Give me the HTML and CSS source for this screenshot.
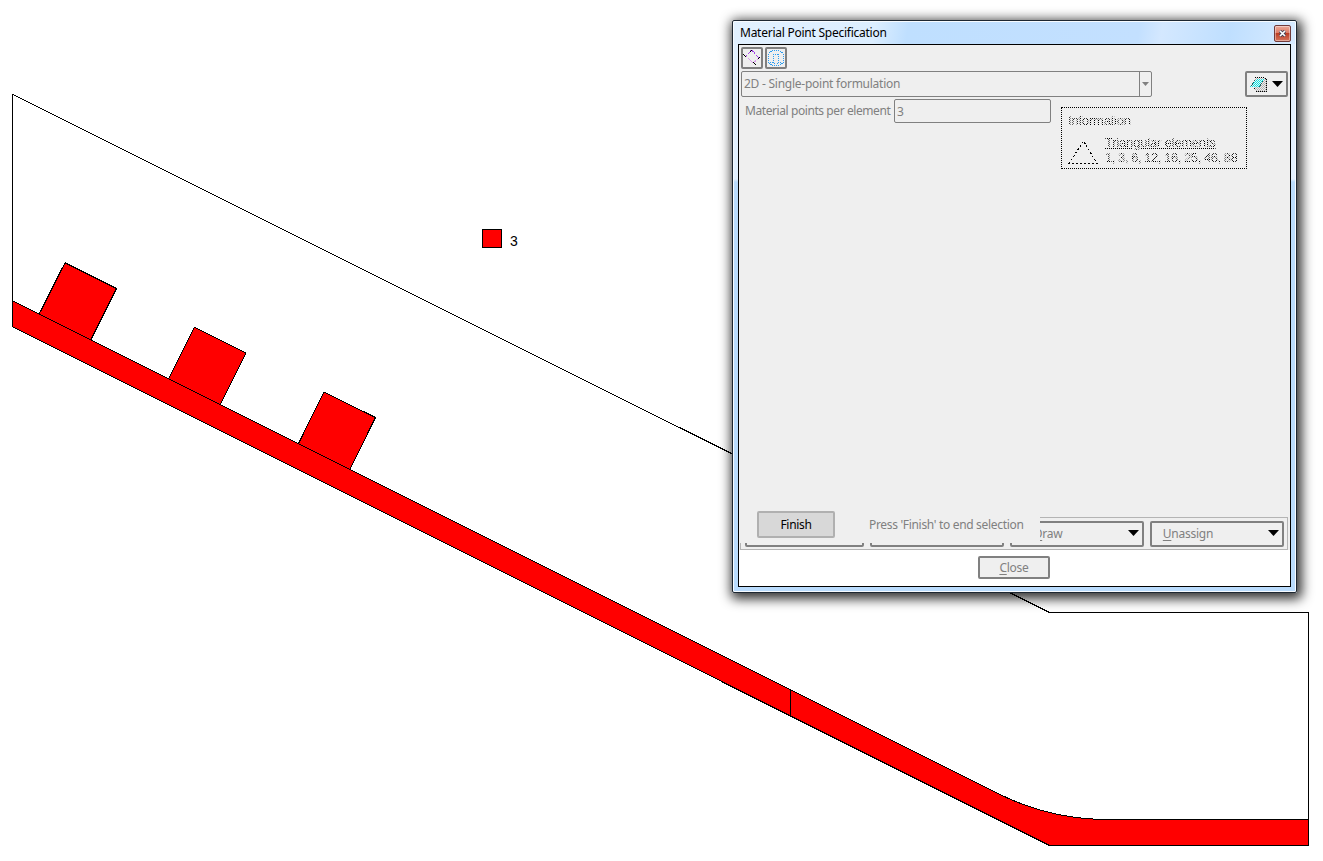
FILE: index.html
```html
<!DOCTYPE html>
<html lang="en">
<head>
<meta charset="utf-8">
<title>Material Point Specification</title>
<link rel="stylesheet" href="styles.css">
</head>
<body>
<main class="desktop">
  <svg class="model" width="1323" height="861" viewBox="0 0 1323 861" shape-rendering="crispEdges">
    <g fill="#f00" stroke="#000">
      <path d="M39.200 314L65 262.700L116.500 288.500L91 339.500"/>
      <path d="M168.800 378.500L194.500 327.200L246 353L220.500 404"/>
      <path d="M298.500 443.500L324 392L375.500 417.500L350 469"/>
      <path d="M12.500 300.800L998 793.500A246 246 0 0 0 1108 819.500H1308.500V845.500H1049.500L12.500 326.800Z"/>
      <path d="M482.500 229.500H501.500V247.500H482.500Z"/>
    </g>
    <path d="M12.500 326.500V94.200L1049.500 612.500H1308.500V845.500M790.500 689.500V715.500" fill="none" stroke="#000"/>
    <text class="model-label" x="510" y="246">3</text>
  </svg>

  <section class="window">
    <header class="titlebar">
      <span class="title">Material Point Specification</span>
      <button class="window-close" aria-label="Close window">
        <svg width="7" height="7" viewBox="0 0 7 7"><path d="M1 1L6 6M6 1L1 6" stroke="#3d4254" stroke-width="3.200"/><path d="M1 1L6 6M6 1L1 6" stroke="#fff" stroke-width="1.700"/></svg>
      </button>
    </header>
    <div class="client">
      <div class="toolbar">
        <button class="tool"><svg width="18" height="18" viewBox="0 0 18 18" shape-rendering="crispEdges" fill="none"><path d="M3 7L8.500 1L16 9" stroke="#a445e8" stroke-dasharray="2 1"/><path d="M3 7L10 14L16 9" stroke="#dc9cf0" stroke-dasharray="2 1"/><path d="M0 5L3 8M7 3L9 1M15 10L17 8M10 13L13 16" stroke="#000"/></svg></button>
        <button class="tool"><svg width="18" height="18" viewBox="0 0 18 18" shape-rendering="crispEdges" fill="none" stroke="#2b9cf0" stroke-dasharray="1 1"><path d="M5 1.500H13M5 16.500H13M1.500 5V14M16.500 5V14M2 4L5 2M13 2L16 4M2 14L5 16M13 16L16 14M6 5.500H12M6.500 5V14M11.500 5V14M3 13.500H7M11 13.500H15M7.500 14V16M10.500 14V16"/></svg></button>
      </div>
      <div class="formulation">
        <div class="combo"><span>2D - Single-point formulation</span><i class="combo-arrow"><svg width="7" height="4"><path d="M0 0H7L3.500 4Z" fill="#808080"/></svg></i></div>
        <button class="shade"><svg width="17" height="17" viewBox="0 0 17 17" shape-rendering="crispEdges">
          <defs>
            <pattern id="cyan" width="2" height="2" patternUnits="userSpaceOnUse"><path d="M0 0H1V1H0ZM1 1H2V2H1Z" fill="#00e5e5"/></pattern>
            <pattern id="grey" width="2" height="2" patternUnits="userSpaceOnUse"><path d="M0 0H1V1H0ZM1 1H2V2H1Z" fill="#b4b4b4"/></pattern>
          </defs>
          <path d="M5 1.500H14.500L16.500 3.500V15.500H6.500L4.500 13.500V10" fill="url(#grey)"/><path d="M5 1.500H14.500L16.500 3.500V15.500H6.500L4.500 13.500V10" fill="none" stroke="#000" stroke-dasharray="1 1"/><path d="M0 11L6 3H14L9 11Z" fill="#efefef"/><path d="M0 11L6 3H14L9 11Z" fill="url(#cyan)"/><path d="M1 10L6 3M9 11L14 4" stroke="#1a6060" stroke-dasharray="1 1"/></svg><svg width="11" height="6"><path d="M0 0H11L5.500 6Z"/></svg></button>
      </div>
      <div class="settings">
        <label class="field"><span>Material points per element</span><input value="3" disabled></label>
        <div class="info">
          <div class="info-heading dithered">Information</div>
          <div class="info-row">
            <svg width="30" height="24" viewBox="0 0 30 24" shape-rendering="crispEdges"><path d="M1 23.500L15.500 1L29 23.500Z" fill="none" stroke="#000" stroke-dasharray="2 2"/></svg>
            <div class="info-text"><div class="dithered underlined">Triangular elements</div><div class="dithered numbers">1, 3, 6, 12, 16, 25, 46, 88</div></div>
          </div>
        </div>
      </div>
      <div class="actions">
        <button class="action"></button>
        <button class="action wide"></button>
        <button class="action wide"><span><u>D</u>raw</span><svg width="11" height="6"><path d="M0 0H11L5.500 6Z"/></svg></button>
        <button class="action wide"><span><u>U</u>nassign</span><svg width="11" height="6"><path d="M0 0H11L5.500 6Z"/></svg></button>
        <div class="selection-prompt"><button class="finish">Finish</button><span>Press 'Finish' to end selection</span></div>
      </div>
      <footer class="footer"><button class="close"><span><u>C</u>lose</span></button></footer>
    </div>
  </section>
</main>
</body>
</html>
```
FILE: styles.css
```css
* { box-sizing: border-box; }
body { margin: 0; background: #fff; overflow: hidden; font: 12px/16px "Noto Sans", "Open Sans", sans-serif; letter-spacing: -0.25px; color: #808080; }
button { font: inherit; letter-spacing: inherit; color: inherit; padding: 0; margin: 0; background: #efefef; border: 2px solid #808080; border-radius: 2px; }
svg { display: block; flex: none; }
u { text-decoration: underline; text-underline-offset: 2px; }
.desktop { position: relative; width: 1323px; height: 861px; }
.model-label { font: 14px "Liberation Sans", Arial, sans-serif; letter-spacing: 0; fill: #000; }

.window {
  position: absolute; left: 732px; top: 20px; width: 565px; height: 573px;
  display: flex; flex-direction: column; padding: 0 5px 5px;
  border: 1px solid #1d2732; border-radius: 2px;
  background: linear-gradient(#e3f1ff 0, #e3f1ff 158px, #badcfd 161px);
  box-shadow: inset 0 0 0 1px #f7fbff, 2px 3px 12px 3px rgba(0, 0, 0, .8);
}
.titlebar {
  flex: none; height: 23px; margin: 0 -4px; padding: 0 4px 0 6px;
  display: flex; align-items: center; justify-content: space-between;
  border-top: 1px solid #f7fbff;
  background: linear-gradient(100deg, #e2f1ff 0, #dceeff 25%, #bfdfff 31%, #c3e0ff 72%, #d4e8ff 76%, #bfdfff 88%, #d8ebff 100%);
}
.title { color: #000; }
.window-close { width: 17px; height: 17px; display: grid; place-items: center; border: 1px solid #713b3b; border-radius: 2px; box-shadow: inset 0 0 0 1px rgba(255,255,255,.4); background: linear-gradient(#eba99a 0, #dc7963 48%, #bd3e24 50%, #d4735b); }

.client { flex: 1; display: flex; flex-direction: column; border: 1px solid #000; background: #efefef; }
.toolbar { height: 26px; padding: 2px 0 0 2px; display: flex; gap: 2px; }
.tool { width: 22px; height: 22px; }
.formulation { height: 26px; padding: 0 2px; display: flex; justify-content: space-between; }
.combo { width: 411px; height: 26px; padding-left: 2px; display: flex; justify-content: space-between; align-items: center; border: 1px solid #808080; border-radius: 2px; }
.combo-arrow { width: 12px; height: 24px; display: grid; place-items: center; border-left: 1px solid #808080; }
.shade { width: 43px; height: 26px; display: flex; align-items: center; justify-content: space-between; padding: 0 3px; }
.settings { flex: 1; display: flex; gap: 10px; padding: 2px 0 0 6px; align-items: flex-start; }
.field { display: flex; align-items: center; justify-content: space-between; width: 306px; height: 24px; white-space: nowrap; letter-spacing: -0.42px; }
.field input { flex: none; width: 157px; height: 24px; padding: 0 2px; font: inherit; color: inherit; background: transparent; border: 1px solid #808080; border-radius: 2px; }
.info { width: 186px; height: 62px; margin-top: 8px; padding: 5px 6px; border: 1px dotted #000; font: 13px/15px "Liberation Sans", Arial, sans-serif; letter-spacing: -0.2px; color: #000; }
.dithered { mask-image: repeating-conic-gradient(#000 0 25%, transparent 0 50%); mask-size: 2px 2px; white-space: nowrap; }
.info-row { display: flex; gap: 7px; margin-top: 7px; }
.info-row svg { margin-top: 5px; }
.underlined { text-decoration: underline; text-underline-offset: 1px; }
.numbers { letter-spacing: -0.45px; }

.actions { position: relative; height: 33px; margin: 0 2px 0 1px; padding: 3px 3px 3px 4px; display: flex; gap: 6px; border: 1px solid #b4b4b4; }
.action { flex: none; width: 119px; height: 26px; display: flex; align-items: center; justify-content: space-between; padding: 0 3px 0 9px; }
.action span { width: 54px; text-align: center; }
.action.wide { width: 134px; }
.action svg { margin-bottom: 2px; }
.selection-prompt { position: absolute; left: -1px; top: -9px; width: 300px; height: 34px; display: flex; align-items: center; gap: 34px; padding: 0 0 3px 17px; background: #efefef; letter-spacing: -0.32px; }
.finish { width: 78px; height: 27px; background: #d8d8d8; border-color: #b0b0b0; color: #000; }
.footer { height: 36px; background: #fff; padding: 6px 0 0 239px; }
.close { display: block; width: 72px; height: 23px; line-height: 18px; }
```
